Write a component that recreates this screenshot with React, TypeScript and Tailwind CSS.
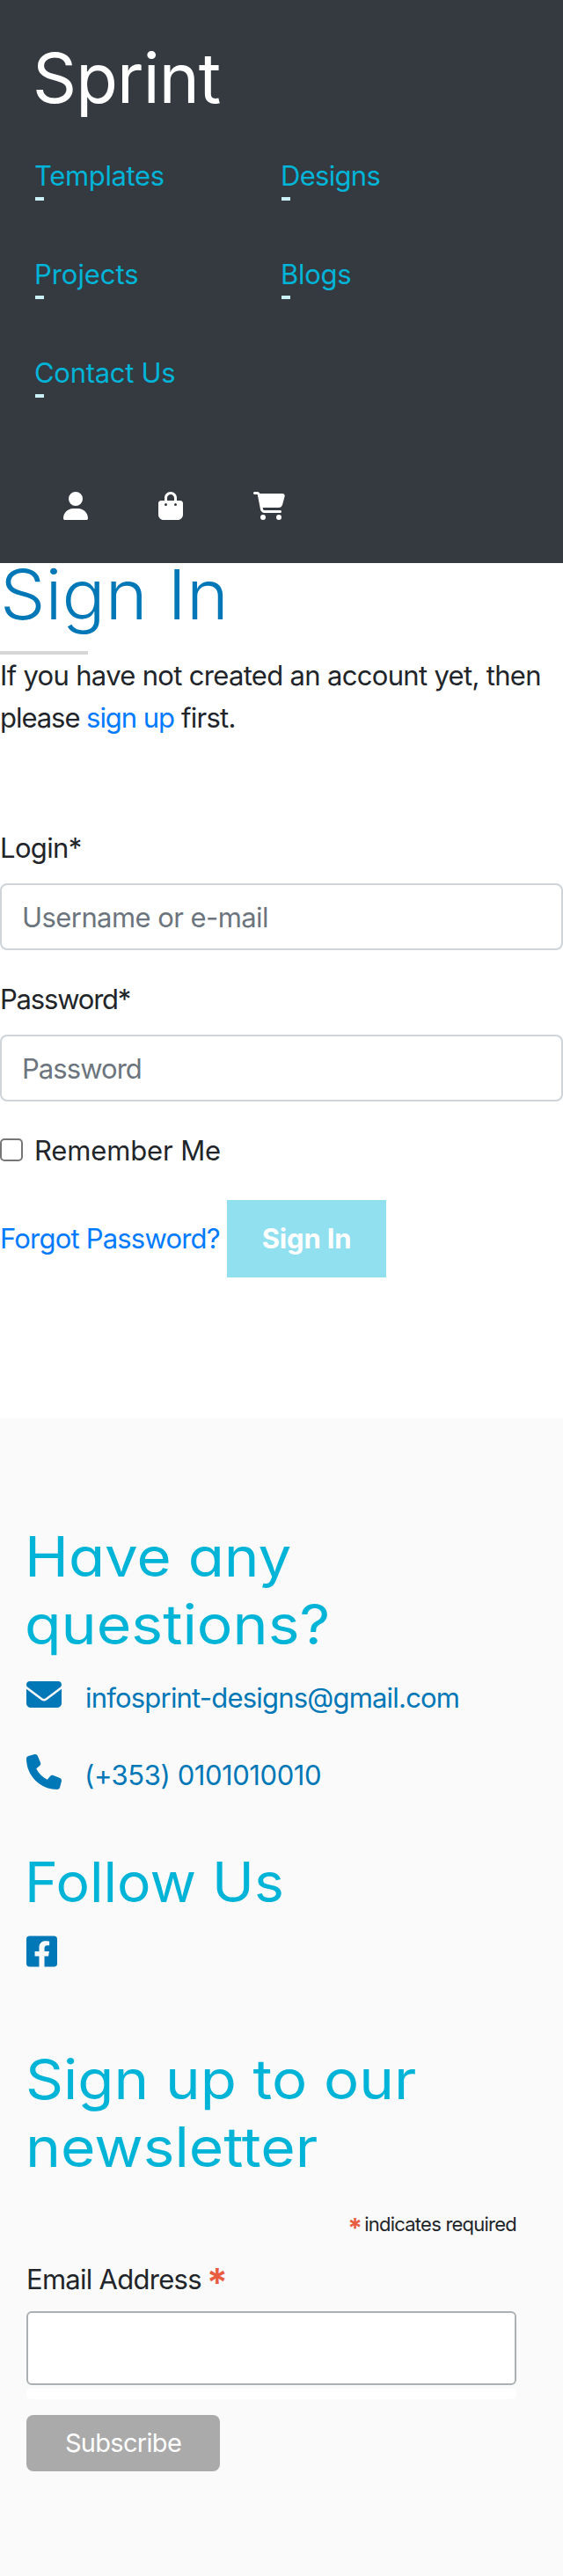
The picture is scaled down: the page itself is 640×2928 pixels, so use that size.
import { FaBagShopping, FaCartShopping, FaEnvelope, FaPhone, FaUser } from "react-icons/fa6";
import { FaFacebookSquare } from "react-icons/fa";

const navLinks = [
  { label: "Templates", className: "tracking-[-0.35px]" },
  { label: "Designs", className: "tracking-[-0.7px]" },
  { label: "Projects", className: "tracking-[-0.05px]" },
  { label: "Blogs", className: "tracking-[-0.3px]" },
  { label: "Contact Us", className: "tracking-[-0.3px]" },
];

function Header() {
  return (
    <header className="h-[640px] bg-[#343a40] pt-[29px]">
      <div className="ml-[37px] h-[120px] text-[78px] leading-[120px] tracking-[-0.9px] text-white">Sprint</div>
      <nav className="mt-[27px] grid grid-cols-[280px_280px] pl-10">
        {navLinks.map((link) => (
          <a key={link.label} href="#" className="block h-28 text-[#00b4d8]">
            <span className={`-ml-px block leading-[48px] ${link.className}`}>{link.label}</span>
            <span className="block h-1 w-2.5 bg-[#caf0f8]" />
          </a>
        ))}
      </nav>
      <div className="mt-[47px] flex gap-20 pl-[72px] text-white">
        <FaUser className="h-8 w-7" />
        <FaBagShopping className="h-8 w-7" />
        <FaCartShopping className="h-8 w-9" />
      </div>
    </header>
  );
}

function SignInForm() {
  return (
    <main className="flow-root h-[972px] bg-white leading-[48px] text-[#212529]">
      <h1 className="-mt-3 h-24 text-[78px] leading-[96px] font-light text-[#0077b6] [font-feature-settings:'cv11']">
        <span className="inline-block origin-left scale-x-[1.045]">Sign In</span>
      </h1>
      <div className="mt-4 h-1 w-[100px] bg-[#d6d6d6]" />
      <p className="whitespace-nowrap">
        <span className="tracking-[-0.68px]">If you have not created an account yet, then</span>
        <br />
        <span className="tracking-[-1.05px]">please </span>
        <a href="#" className="tracking-[-1.04px] text-[#007bff]">sign up</a>
        <span className="tracking-[-0.75px]"> first.</span>
      </p>
      <form className="mt-[100px]">
        <label className="block tracking-[-0.65px]">Login*</label>
        <input
          type="text"
          placeholder="Username or e-mail"
          className="mt-4 block h-[76px] w-full rounded-lg border-2 border-[#ced4da] bg-white pl-[23px] tracking-[-0.57px] placeholder:text-[#6c757d]"
        />
        <label className="mt-8 block tracking-[-1.2px]">Password*</label>
        <input
          type="password"
          placeholder="Password"
          className="mt-4 block h-[76px] w-full rounded-lg border-2 border-[#ced4da] bg-white pl-[23px] tracking-[-0.95px] placeholder:text-[#6c757d]"
        />
        <label className="mt-8 flex h-12">
          <input
            type="checkbox"
            className="mt-2.5 h-[26px] w-[26px] appearance-none rounded-[5px] border-2 border-[#767676] bg-white"
          />
          <span className="ml-[13px] tracking-[-0.14px]">Remember Me</span>
        </label>
        <div className="mt-8 flex items-center">
          <a href="#" className="w-[258px] whitespace-nowrap tracking-[-0.8px] text-[#007bff]">Forgot Password?</a>
          <button type="button" className="h-[88px] w-[181px] bg-[#90e0ef] font-bold tracking-[-0.2px] text-white">
            Sign In
          </button>
        </div>
      </form>
    </main>
  );
}

function Footer() {
  const heading = "text-[63px] leading-[77px] text-[#00b4d8] whitespace-nowrap [font-feature-settings:'cv11']";
  return (
    <footer className="h-[1316px] bg-[#fafafa] px-[30px] pt-[119px] leading-[48px] text-[#212529]">
      <h2 className={`-ml-0.5 ${heading}`}>
        <span className="block origin-left scale-x-[1.067]">Have any</span>
        <span className="block origin-left scale-x-[1.078]">questions?</span>
      </h2>
      <div className="mt-[21px] flex text-[#0077b6]">
        <FaEnvelope className="h-10 w-10" />
        <span className="ml-[27px] tracking-[-0.8px]">infosprint-designs@gmail.com</span>
      </div>
      <div className="mt-10 flex text-[#0077b6]">
        <FaPhone className="h-10 w-10" />
        <span className="ml-[26px] tracking-[-0.43px]">(+353) 0101010010</span>
      </div>
      <h2 className={`mt-[59px] -ml-0.5 ${heading}`}>
        <span className="block origin-left scale-x-[1.02]">Follow Us</span>
      </h2>
      <FaFacebookSquare className="mt-5 h-10 w-[35px] text-[#0077b6]" />
      <h2 className={`mt-[87px] -ml-px ${heading}`}>
        <span className="block origin-left scale-x-[1.065]">Sign up to our</span>
        <span className="block origin-left scale-x-[1.075]">newsletter</span>
      </h2>
      <form className="w-[557px]">
        <div className="mt-[33px] text-right text-[22px] leading-[33px] tracking-[-0.77px]">
          <span className="inline-block h-[33px] w-[19px] text-left align-top text-[30px] leading-[41px] font-bold tracking-normal text-[#e85c41]">
            *
          </span>
          indicates required
        </div>
        <label className="mt-[22px] block h-12">
          <span className="tracking-[-0.72px]">Email Address</span>
          <span className="ml-1.5 inline-block h-12 align-top text-[44px] leading-[54px] font-semibold text-[#e85c41]">*</span>
        </label>
        <input type="email" className="mt-3 block h-[84px] w-full rounded-md border-2 border-[#abb0b2] bg-white px-4" />
        <div className="mt-1 h-3 rounded-md bg-white" />
        <button
          type="button"
          className="mt-[18px] block h-16 w-[220px] rounded-lg bg-[#aaaaaa] text-[29px] tracking-[-0.69px] text-white"
        >
          Subscribe
        </button>
      </form>
    </footer>
  );
}

export default function App() {
  return (
    <div className="w-[640px] overflow-hidden font-['Inter',sans-serif] text-[31px]">
      <Header />
      <SignInForm />
      <Footer />
    </div>
  );
}
